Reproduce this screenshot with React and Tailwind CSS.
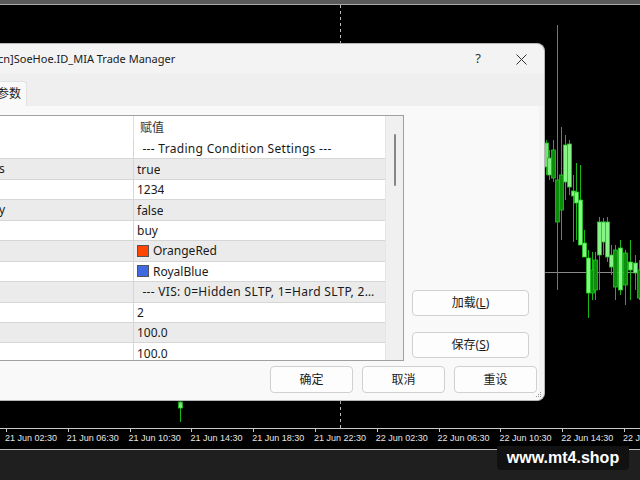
import React from 'react';

const candles = [
  { x: 546, h: [140, 175], b: [143, 167], l: 1 },
  { x: 549, h: [150, 180], b: [158, 175], l: 1 },
  { x: 553, h: [140, 182], b: [150, 178], l: 0 },
  { x: 557, h: [25, 290], b: [180, 222], l: 0 },
  { x: 561, h: [127, 240], b: [175, 210], l: 0 },
  { x: 565, h: [135, 200], b: [145, 182], l: 1 },
  { x: 569, h: [140, 195], b: [144, 187], l: 1 },
  { x: 573, h: [175, 242], b: [191, 196], l: 1 },
  { x: 576, h: [163, 240], b: [192, 203], l: 1 },
  { x: 580, h: [165, 245], b: [200, 245], l: 1 },
  { x: 584, h: [230, 257], b: [243, 257], l: 1 },
  { x: 588, h: [250, 318], b: [258, 293], l: 1 },
  { x: 592, h: [252, 300], b: [270, 293], l: 0 },
  { x: 595, h: [252, 300], b: [260, 290], l: 0 },
  { x: 599, h: [217, 290], b: [222, 255], l: 1 },
  { x: 603, h: [218, 255], b: [222, 242], l: 1 },
  { x: 607, h: [217, 262], b: [222, 257], l: 1 },
  { x: 611, h: [245, 275], b: [255, 267], l: 1 },
  { x: 615, h: [245, 300], b: [250, 287], l: 0 },
  { x: 620, h: [240, 295], b: [248, 290], l: 1 },
  { x: 625, h: [250, 305], b: [253, 285], l: 0 },
  { x: 630, h: [240, 300], b: [262, 270], l: 1 },
  { x: 635, h: [255, 290], b: [263, 273], l: 1 },
  { x: 639, h: [260, 300], b: [270, 298], l: 0 },
  { x: 180, h: [400, 422], b: [402, 408], l: 1 },
];

const times = [
  '21 Jun 02:30', '21 Jun 06:30', '21 Jun 10:30', '21 Jun 14:30', '21 Jun 18:30', '21 Jun 22:30',
  '22 Jun 02:30', '22 Jun 06:30', '22 Jun 10:30', '22 Jun 14:30', '22 Jun 18:30',
];

const rows = [
  { n: '', v: ' --- Trading Condition Settings ---', d: 1 },
  { n: 's', v: 'true' },
  { n: '', v: '1234' },
  { n: 'y', v: 'false' },
  { n: '', v: 'buy' },
  { n: '', v: 'OrangeRed', c: '#ff4500' },
  { n: '', v: 'RoyalBlue', c: '#4169e1' },
  { n: '', v: ' --- VIS: 0=Hidden SLTP, 1=Hard SLTP, 2=Hard SL, 3=Hard TP', d: 1 },
  { n: '', v: '2' },
  { n: '', v: '100.0' },
  { n: '', v: '100.0' },
];

function Chart() {
  return (
    <svg className="absolute inset-0" width="640" height="428">
      <line x1="340.5" y1="5" x2="340.5" y2="428" stroke="#bdbdbd" strokeDasharray="3 3" />
      <line x1="0" y1="272.5" x2="640" y2="272.5" stroke="#8a8a8a" />
      {candles.map((c, i) => (
        <g key={i}>
          <line x1={c.x + 0.5} y1={c.h[0]} x2={c.x + 0.5} y2={c.h[1]} stroke="#13b813" />
          <rect
            x={c.x - 1.5}
            y={c.b[0]}
            width="4"
            height={c.b[1] - c.b[0]}
            fill={c.l ? '#86f586' : '#0b8f0b'}
            stroke="#22c922"
            strokeWidth="0.8"
          />
        </g>
      ))}
    </svg>
  );
}

function Btn({ children, className = '' }) {
  return (
    <div className={`flex items-center justify-center bg-[#fdfdfd] border border-[#d0d0d0] rounded-[4px] text-[12px] text-[#1b1b1b] ${className}`}>
      {children}
    </div>
  );
}

function Dialog() {
  return (
    <div className="absolute left-0 top-[43px] w-[545px] h-[358px] bg-[#f3f3f3] border-r border-y border-[#b8b8b8] rounded-r-[8px] flex flex-col overflow-hidden shadow-[0_2px_6px_rgba(0,0,0,0.3)]">
      {/* title bar */}
      <div className="h-[30px] flex items-center shrink-0">
        <span className="-ml-[2px] text-[11px] text-[#1a1a1a]">cn]SoeHoe.ID_MIA Trade Manager</span>
        <span className="ml-auto text-[13px] text-[#333]">?</span>
        <svg className="ml-[35px] mr-[17px]" width="11" height="11" viewBox="0 0 11 11">
          <path d="M0.5 0.5 L10.5 10.5 M10.5 0.5 L0.5 10.5" stroke="#333" strokeWidth="1" />
        </svg>
      </div>
      {/* tab strip */}
      <div className="h-[32px] bg-[#efefef] flex items-end shrink-0">
        <div className="w-[27px] h-[25px] bg-[#f9f9f9] border-r border-t border-[#e2e2e2] rounded-tr-[4px] flex items-center overflow-hidden">
          <span className="-ml-[3px] text-[12px] text-[#1a1a1a] whitespace-nowrap">参数</span>
        </div>
      </div>
      {/* panel */}
      <div className="flex-1 bg-[#f9f9f9] mr-[5px] flex flex-col">
        <div className="flex items-end mt-[9px]">
          <div className="w-[404px] h-[246px] border-y border-r border-[#a0a0a0] bg-white flex overflow-hidden">
            <div className="w-[385px] flex flex-col">
              <div className="h-[23px] flex shrink-0">
                <div className="w-[134px] border-r border-[#e0e0e0]" />
                <div className="pl-[6px] text-[12px] leading-[23px] text-[#333]">赋值</div>
              </div>
              {rows.map((r, i) => (
                <div
                  key={i}
                  className={`h-[20.44px] shrink-0 flex border-b border-[#d6d6d6] text-[12px] text-[#1a1a1a] ${i % 2 ? 'bg-[#ebebeb]' : 'bg-white'}`}
                >
                  <div className="w-[135px] shrink-0 border-r border-[#d6d6d6] -ml-[1px] leading-[19px] overflow-hidden">{r.n}</div>
                  <div className={`flex-1 min-w-0 leading-[19px] whitespace-pre flex items-center ${r.d ? 'pl-[5px] pr-[6px] tracking-[0.3px]' : 'pl-[3px] pr-[8px]'}`}>
                    {r.c && <span className="w-[12px] h-[12px] mr-[4px] shrink-0 border border-[#555]" style={{ background: r.c }} />}
                    <span className="overflow-hidden text-ellipsis">{r.v}</span>
                  </div>
                </div>
              ))}
            </div>
            <div className="w-[18px] bg-[#f0f0f0] border-l border-[#e6e6e6] flex justify-center">
              <div className="w-[2px] h-[52px] mt-[18px] rounded bg-[#868686]" />
            </div>
          </div>
          <div className="ml-[8px] w-[117px] flex flex-col gap-[16px] pb-[3px]">
            <Btn className="h-[26px]">
              加载(<span className="underline">L</span>)
            </Btn>
            <Btn className="h-[26px]">
              保存(<span className="underline">S</span>)
            </Btn>
          </div>
        </div>
        <div className="flex gap-[9px] ml-[270px] mt-[5px]">
          <Btn className="w-[83px] h-[27px] border-[#3b8fd6]">确定</Btn>
          <Btn className="w-[83px] h-[27px]">取消</Btn>
          <Btn className="w-[83px] h-[27px]">重设</Btn>
        </div>
      </div>
      <svg className="absolute right-[2px] bottom-[2px]" width="6" height="6" viewBox="0 0 6 6">
        <rect x="4" y="0" width="1" height="1" fill="#999" />
        <rect x="2" y="2" width="1" height="1" fill="#999" />
        <rect x="4" y="2" width="1" height="1" fill="#999" />
        <rect x="0" y="4" width="1" height="1" fill="#999" />
        <rect x="2" y="4" width="1" height="1" fill="#999" />
        <rect x="4" y="4" width="1" height="1" fill="#999" />
      </svg>
    </div>
  );
}

export default function App() {
  return (
    <div className="w-[640px] h-[480px] bg-black relative overflow-hidden font-['Noto_Sans','Noto_Sans_CJK_SC',sans-serif] flex flex-col">
      <div className="h-[4px] bg-[#5a5a5a] shrink-0" />
      <div className="h-[1px] bg-[#a8a8a8] shrink-0" />
      <div className="h-[423px] relative shrink-0">
        <div className="absolute inset-x-0 -top-[5px]">
          <Chart />
        </div>
      </div>
      {/* time axis */}
      <div className="h-[21px] border-t border-[#c8c8c8] flex pl-[5px] shrink-0 font-['Liberation_Sans',sans-serif]">
        {times.map((t) => (
          <div key={t} className="w-[61.8px] shrink-0 flex flex-col">
            <div className="w-px h-[3px] bg-[#c8c8c8] ml-[1px]" />
            <span className="text-[9px] leading-[13px] text-[#e6e6e6] whitespace-nowrap">{t}</span>
          </div>
        ))}
      </div>
      <div className="flex-1 bg-[#1f1f1f] border-t border-[#bdbdbd]" />
      <Dialog />
      <div className="absolute left-[497px] top-[446px] w-[132px] h-[24px] bg-[#111] rounded-b-[4px] flex items-center justify-center">
        <span className="text-[16px] font-bold text-white font-['Liberation_Sans',sans-serif] leading-none">www.mt4.shop</span>
      </div>
    </div>
  );
}
